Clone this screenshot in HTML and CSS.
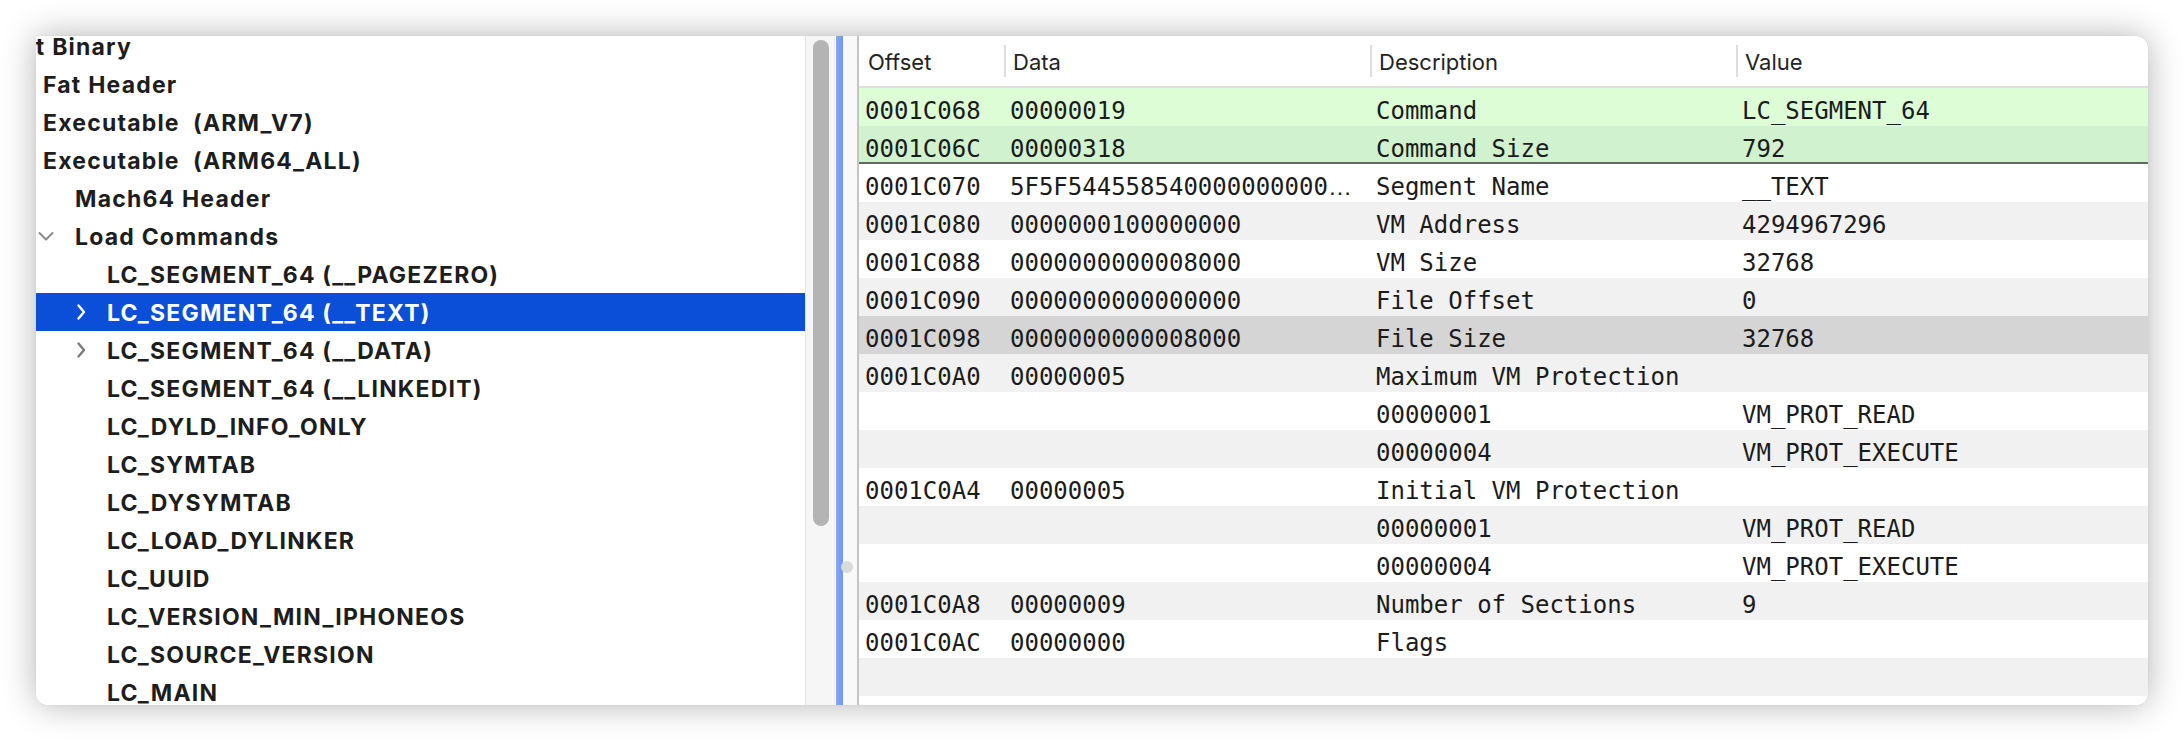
FILE: index.html
```html
<!DOCTYPE html>
<html>
<head>
<meta charset="utf-8">
<link rel="stylesheet" href="styles.css">
</head>
<body>
<div class="window">
  <div class="tree-pane">
    <div class="tree">
      <div class="row d0"><span class="disc"></span><span class="label">Fat Binary</span></div>
      <div class="row d1"><span class="disc"></span><span class="label">Fat Header</span></div>
      <div class="row d1"><span class="disc"></span><span class="label">Executable&nbsp; (ARM_V7)</span></div>
      <div class="row d1"><span class="disc"></span><span class="label">Executable&nbsp; (ARM64_ALL)</span></div>
      <div class="row d2"><span class="disc"></span><span class="label">Mach64 Header</span></div>
      <div class="row d2"><span class="disc"><svg viewBox="0 0 24 24" width="24" height="24"><path d="M2.5 9 L9 15.5 L15.5 9" fill="none" stroke="#8a8a8a" stroke-width="2" stroke-linecap="round" stroke-linejoin="round"/></svg></span><span class="label">Load Commands</span></div>
      <div class="row d3"><span class="disc"></span><span class="label">LC_SEGMENT_64 (__PAGEZERO)</span></div>
      <div class="row d3 selected"><span class="disc"><svg viewBox="0 0 24 24" width="24" height="24"><path d="M9.5 5.5 L15 12 L9.5 18.5" fill="none" stroke="#ffffff" stroke-width="2.4" stroke-linecap="round" stroke-linejoin="round"/></svg></span><span class="label">LC_SEGMENT_64 (__TEXT)</span></div>
      <div class="row d3"><span class="disc"><svg viewBox="0 0 24 24" width="24" height="24"><path d="M9.5 5.5 L15 12 L9.5 18.5" fill="none" stroke="#7a7a7a" stroke-width="2.4" stroke-linecap="round" stroke-linejoin="round"/></svg></span><span class="label">LC_SEGMENT_64 (__DATA)</span></div>
      <div class="row d3"><span class="disc"></span><span class="label">LC_SEGMENT_64 (__LINKEDIT)</span></div>
      <div class="row d3"><span class="disc"></span><span class="label">LC_DYLD_INFO_ONLY</span></div>
      <div class="row d3"><span class="disc"></span><span class="label">LC_SYMTAB</span></div>
      <div class="row d3"><span class="disc"></span><span class="label">LC_DYSYMTAB</span></div>
      <div class="row d3"><span class="disc"></span><span class="label">LC_LOAD_DYLINKER</span></div>
      <div class="row d3"><span class="disc"></span><span class="label">LC_UUID</span></div>
      <div class="row d3"><span class="disc"></span><span class="label">LC_VERSION_MIN_IPHONEOS</span></div>
      <div class="row d3"><span class="disc"></span><span class="label">LC_SOURCE_VERSION</span></div>
      <div class="row d3"><span class="disc"></span><span class="label">LC_MAIN</span></div>
    </div>
  </div>
  <div class="scrollbar"><div class="thumb"></div></div>
  <div class="divider">
    <div class="edge"></div>
    <div class="blue"></div>
    <div class="gap"></div>
    <div class="line"></div>
    <span class="dot"></span>
  </div>
  <div class="table">
    <div class="thead">
      <div class="th">Offset</div>
      <div class="th sep">Data</div>
      <div class="th sep">Description</div>
      <div class="th sep">Value</div>
    </div>
    <div class="tbody">
      <div class="tr green1"><div class="td">0001C068</div><div class="td">00000019</div><div class="td">Command</div><div class="td">LC_SEGMENT_64</div></div>
      <div class="tr green2"><div class="td">0001C06C</div><div class="td">00000318</div><div class="td">Command Size</div><div class="td">792</div></div>
      <div class="tr"><div class="td">0001C070</div><div class="td">5F5F544558540000000000<span class="ell">…</span></div><div class="td">Segment Name</div><div class="td">__TEXT</div></div>
      <div class="tr alt"><div class="td">0001C080</div><div class="td">0000000100000000</div><div class="td">VM Address</div><div class="td">4294967296</div></div>
      <div class="tr"><div class="td">0001C088</div><div class="td">0000000000008000</div><div class="td">VM Size</div><div class="td">32768</div></div>
      <div class="tr alt"><div class="td">0001C090</div><div class="td">0000000000000000</div><div class="td">File Offset</div><div class="td">0</div></div>
      <div class="tr sel"><div class="td">0001C098</div><div class="td">0000000000008000</div><div class="td">File Size</div><div class="td">32768</div></div>
      <div class="tr alt"><div class="td">0001C0A0</div><div class="td">00000005</div><div class="td">Maximum VM Protection</div><div class="td"></div></div>
      <div class="tr"><div class="td"></div><div class="td"></div><div class="td">00000001</div><div class="td">VM_PROT_READ</div></div>
      <div class="tr alt"><div class="td"></div><div class="td"></div><div class="td">00000004</div><div class="td">VM_PROT_EXECUTE</div></div>
      <div class="tr"><div class="td">0001C0A4</div><div class="td">00000005</div><div class="td">Initial VM Protection</div><div class="td"></div></div>
      <div class="tr alt"><div class="td"></div><div class="td"></div><div class="td">00000001</div><div class="td">VM_PROT_READ</div></div>
      <div class="tr"><div class="td"></div><div class="td"></div><div class="td">00000004</div><div class="td">VM_PROT_EXECUTE</div></div>
      <div class="tr alt"><div class="td">0001C0A8</div><div class="td">00000009</div><div class="td">Number of Sections</div><div class="td">9</div></div>
      <div class="tr"><div class="td">0001C0AC</div><div class="td">00000000</div><div class="td">Flags</div><div class="td"></div></div>
      <div class="tr alt"><div class="td"></div><div class="td"></div><div class="td"></div><div class="td"></div></div>
      <div class="tr"><div class="td"></div><div class="td"></div><div class="td"></div><div class="td"></div></div>
    </div>
  </div>
</div>
</body>
</html>
```
FILE: styles.css
```css
html, body {
  margin: 0;
  padding: 0;
  background: #ffffff;
}
body {
  padding: 36px 36px 0 36px;
  height: 742px;
  box-sizing: border-box;
  overflow: hidden;
}
.window {
  width: 2112px;
  height: 669px;
  display: flex;
  background: #ffffff;
  border-radius: 0 12px 12px 12px;
  box-shadow: 0 0 34px rgba(0, 0, 0, 0.30), 0 0 1px rgba(0, 0, 0, 0.2);
  overflow: hidden;
}

/* ---------- tree ---------- */
.tree-pane {
  width: 769px;
  flex: none;
  overflow: hidden;
  background: #ffffff;
}
.tree {
  margin-top: -9px;
  margin-left: -63px;
  width: calc(100% + 63px);
  font-family: "Inter", "Noto Sans", sans-serif;
  font-weight: 700;
  font-size: 23px;
  letter-spacing: 1.2px;
  color: #1d1d1d;
}
.row {
  display: flex;
  align-items: center;
  height: 38px;
  white-space: nowrap;
}
.row.d0 .label { margin-left: -4px; }
.row.d1 { padding-left: 32px; }
.row.d2 { padding-left: 64px; }
.row.d3 { padding-left: 96px; }
.disc {
  width: 24px;
  height: 24px;
  margin-right: 14px;
  flex: none;
  display: flex;
}
.label {
  padding-top: 2px;
}
.row.selected {
  background: #0b4fd8;
  color: #ffffff;
}

/* ---------- scrollbar ---------- */
.scrollbar {
  width: 30px;
  flex: none;
  box-sizing: border-box;
  background: #f6f6f6;
  border-left: 1px solid #e4e4e4;
  border-right: 1px solid #ededed;
}
.thumb {
  margin: 4px 0 0 7px;
  width: 16px;
  height: 486px;
  border-radius: 8px;
  background: #b4b4b4;
}

/* ---------- divider ---------- */
.divider {
  width: 24px;
  flex: none;
  display: flex;
  position: relative;
}
.edge { width: 1px; background: #fbfbfb; }
.blue {
  width: 7px;
  background: linear-gradient(to right, #82a9f5, #6f97ee);
}
.gap { flex: 1; background: #f9f9f9; }
.line { width: 2px; background: #c4c4c4; }
.dot {
  position: absolute;
  left: 6px;
  top: 525px;
  width: 12px;
  height: 12px;
  border-radius: 50%;
  background: #dadada;
}

/* ---------- table ---------- */
.table {
  flex: 1;
  min-width: 0;
  display: flex;
  flex-direction: column;
  overflow: hidden;
}
.thead {
  flex: none;
  display: grid;
  grid-template-columns: 145px 366px 366px 1fr;
  height: 52px;
  box-sizing: border-box;
  border-bottom: 2px solid #e0e0e0;
  font-family: "Inter", "Noto Sans", sans-serif;
  font-size: 22px;
  color: #232323;
}
.th {
  display: flex;
  align-items: center;
  padding-left: 9px;
  padding-top: 1px;
}
.th.sep {
  background: linear-gradient(#dedede, #dedede) left center / 2px 32px no-repeat;
}
.tbody {
  flex: none;
  font-family: "DejaVu Sans Mono", "Liberation Mono", monospace;
  font-size: 24px;
  color: #1b1b1b;
}
.tr {
  display: grid;
  grid-template-columns: 145px 366px 366px 1fr;
  height: 38px;
  box-sizing: border-box;
  background: #ffffff;
}
.tr.alt { background: #f0f1f0; }
.tr.sel { background: #d5d5d5; }
.tr.green1 { background: #ddfdd7; }
.tr.green2 { background: #d0f2cf; border-bottom: 2px solid #666666; }
.td {
  padding: 8px 0 0 6px;
  line-height: 30px;
  white-space: nowrap;
  overflow: hidden;
}
.ell {
  font-family: "Liberation Sans", sans-serif;
}
```
